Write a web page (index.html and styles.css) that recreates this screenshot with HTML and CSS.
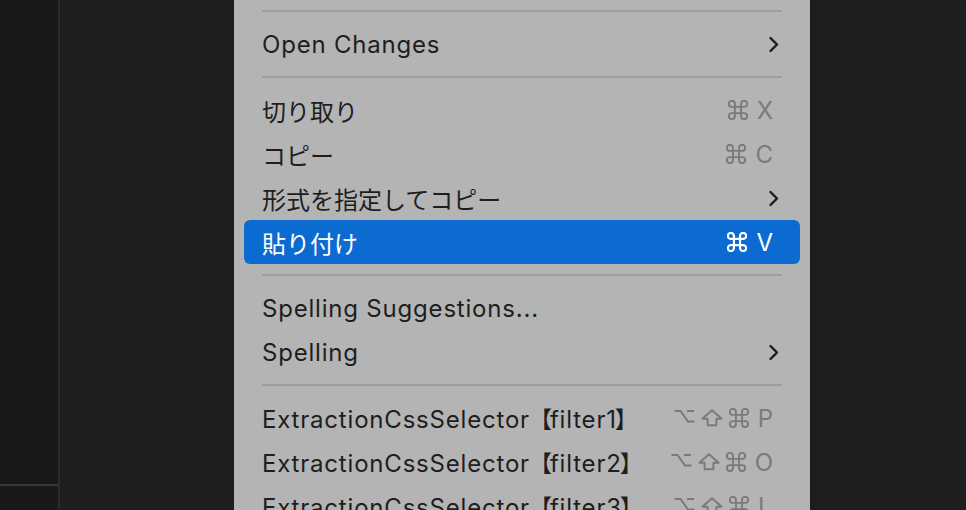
FILE: index.html
```html
<!DOCTYPE html>
<html lang="ja">
<head>
<meta charset="utf-8">
<title>Context menu</title>
<link rel="stylesheet" href="styles.css">
</head>
<body>
<div class="app">
  <aside class="sidebar">
    <div class="sidebar-main"></div>
    <div class="sidebar-foot"></div>
  </aside>
  <div class="editor"></div>
  <div class="menu">
    <div class="sep"><div class="line"></div></div>
    <div class="item"><span class="label">Open Changes</span><span class="chev"><svg width="12" height="17" viewBox="0 0 12 17"><path d="M2.5 2 L9 8.5 L2.5 15" fill="none" stroke="#1c1c1c" stroke-width="2.4" stroke-linecap="round" stroke-linejoin="round"/></svg></span></div>
    <div class="sep"><div class="line"></div></div>
    <div class="item"><span class="label ja">切り取り</span><span class="keys"><svg class="cmd" width="20" height="20" viewBox="2.2 2.2 19.6 19.6"><path d="M15 6v12a3 3 0 1 0 3-3H6a3 3 0 1 0 3 3V6a3 3 0 1 0-3 3h12a3 3 0 1 0-3-3" fill="none" stroke="currentColor" stroke-width="1.8"/></svg><span class="key">X</span></span></div>
    <div class="item"><span class="label ja">コピー</span><span class="keys"><svg class="cmd" width="20" height="20" viewBox="2.2 2.2 19.6 19.6"><path d="M15 6v12a3 3 0 1 0 3-3H6a3 3 0 1 0 3 3V6a3 3 0 1 0-3 3h12a3 3 0 1 0-3-3" fill="none" stroke="currentColor" stroke-width="1.8"/></svg><span class="key">C</span></span></div>
    <div class="item"><span class="label ja">形式を指定してコピー</span><span class="chev"><svg width="12" height="17" viewBox="0 0 12 17"><path d="M2.5 2 L9 8.5 L2.5 15" fill="none" stroke="#1c1c1c" stroke-width="2.4" stroke-linecap="round" stroke-linejoin="round"/></svg></span></div>
    <div class="item active"><span class="label ja">貼り付け</span><span class="keys"><svg class="cmd" width="20" height="20" viewBox="2.2 2.2 19.6 19.6"><path d="M15 6v12a3 3 0 1 0 3-3H6a3 3 0 1 0 3 3V6a3 3 0 1 0-3 3h12a3 3 0 1 0-3-3" fill="none" stroke="currentColor" stroke-width="2.1"/></svg><span class="key">V</span></span></div>
    <div class="sep"><div class="line"></div></div>
    <div class="item"><span class="label">Spelling Suggestions...</span></div>
    <div class="item"><span class="label">Spelling</span><span class="chev"><svg width="12" height="17" viewBox="0 0 12 17"><path d="M2.5 2 L9 8.5 L2.5 15" fill="none" stroke="#1c1c1c" stroke-width="2.4" stroke-linecap="round" stroke-linejoin="round"/></svg></span></div>
    <div class="sep"><div class="line"></div></div>
    <div class="item"><span class="label">ExtractionCssSelector<span class="brk l">【</span>filter1<span class="brk r">】</span></span><span class="keys"><svg class="opt" width="21" height="20" viewBox="0 0 21 20"><path d="M0.5 3h6l7.5 10.5h6.5M13 3h7" fill="none" stroke="currentColor" stroke-width="2"/></svg><svg class="shift" width="22" height="20" viewBox="0 0 22 20"><path d="M11 2.2 L20.6 10.8 H15.4 V17.2 H6.6 V10.8 H1.4 Z" fill="none" stroke="currentColor" stroke-width="1.9" stroke-linejoin="round"/></svg><svg class="cmd" width="20" height="20" viewBox="2.2 2.2 19.6 19.6"><path d="M15 6v12a3 3 0 1 0 3-3H6a3 3 0 1 0 3 3V6a3 3 0 1 0-3 3h12a3 3 0 1 0-3-3" fill="none" stroke="currentColor" stroke-width="1.8"/></svg><span class="key">P</span></span></div>
    <div class="item"><span class="label">ExtractionCssSelector<span class="brk l">【</span>filter2<span class="brk r">】</span></span><span class="keys"><svg class="opt" width="21" height="20" viewBox="0 0 21 20"><path d="M0.5 3h6l7.5 10.5h6.5M13 3h7" fill="none" stroke="currentColor" stroke-width="2"/></svg><svg class="shift" width="22" height="20" viewBox="0 0 22 20"><path d="M11 2.2 L20.6 10.8 H15.4 V17.2 H6.6 V10.8 H1.4 Z" fill="none" stroke="currentColor" stroke-width="1.9" stroke-linejoin="round"/></svg><svg class="cmd" width="20" height="20" viewBox="2.2 2.2 19.6 19.6"><path d="M15 6v12a3 3 0 1 0 3-3H6a3 3 0 1 0 3 3V6a3 3 0 1 0-3 3h12a3 3 0 1 0-3-3" fill="none" stroke="currentColor" stroke-width="1.8"/></svg><span class="key">O</span></span></div>
    <div class="item"><span class="label">ExtractionCssSelector<span class="brk l">【</span>filter3<span class="brk r">】</span></span><span class="keys"><svg class="opt" width="21" height="20" viewBox="0 0 21 20"><path d="M0.5 3h6l7.5 10.5h6.5M13 3h7" fill="none" stroke="currentColor" stroke-width="2"/></svg><svg class="shift" width="22" height="20" viewBox="0 0 22 20"><path d="M11 2.2 L20.6 10.8 H15.4 V17.2 H6.6 V10.8 H1.4 Z" fill="none" stroke="currentColor" stroke-width="1.9" stroke-linejoin="round"/></svg><svg class="cmd" width="20" height="20" viewBox="2.2 2.2 19.6 19.6"><path d="M15 6v12a3 3 0 1 0 3-3H6a3 3 0 1 0 3 3V6a3 3 0 1 0-3 3h12a3 3 0 1 0-3-3" fill="none" stroke="currentColor" stroke-width="1.8"/></svg><span class="key">I</span></span></div>
  </div>
  <div class="rightpane"></div>
</div>
</body>
</html>
```

FILE: styles.css
```css
html, body {
  margin: 0;
  padding: 0;
  background: #1f1f1f;
}
.app {
  display: flex;
  width: 966px;
  height: 510px;
  overflow: hidden;
}
.sidebar {
  width: 58px;
  flex: none;
  display: flex;
  flex-direction: column;
  background: #191919;
  border-right: 2px solid #2b2b2b;
}
.sidebar-main {
  height: 484px;
  flex: none;
}
.sidebar-foot {
  flex: 1;
  border-top: 2px solid #383838;
}
.editor {
  width: 174px;
  flex: none;
  background: #1f1f1f;
}
.menu {
  width: 556px;
  flex: none;
  padding: 0 10px;
  background: #b4b4b4;
  font-family: Inter, "Noto Sans CJK JP", sans-serif;
  font-size: 24px;
  color: #1e1e1e;
}
.rightpane {
  flex: 1;
  background: #1f1f1f;
  box-shadow: inset 12px 0 8px -6px rgba(0,0,0,0.08);
}
.sep {
  height: 22px;
  padding: 10px 18px 0;
  box-sizing: border-box;
}
.line {
  height: 2px;
  background: #9e9e9e;
}
.item {
  height: 44px;
  display: flex;
  align-items: center;
  justify-content: space-between;
  padding: 0 27px 0 18px;
  border-radius: 6px;
}
.item .label {
  white-space: nowrap;
  letter-spacing: 0.8px;
}
.item .label.ja {
  font-size: 24px;
  letter-spacing: 0;
}
.brk {
  font-size: 23px;
  letter-spacing: 0;
}
.brk.l {
  margin-left: -1px;
  margin-right: -2px;
}
.brk.r {
  margin-left: -2px;
}
.item.active {
  background: #0c6bd1;
  color: #ffffff;
}
.keys {
  display: flex;
  align-items: center;
  gap: 6px;
  color: #7a7a7a;
}
.active .keys {
  color: #ffffff;
}
.keys svg {
  display: block;
}
.key {
  margin-left: 3px;
  min-width: 15px;
  text-align: left;
}
.chev {
  display: flex;
  margin-right: -7px;
}
```
